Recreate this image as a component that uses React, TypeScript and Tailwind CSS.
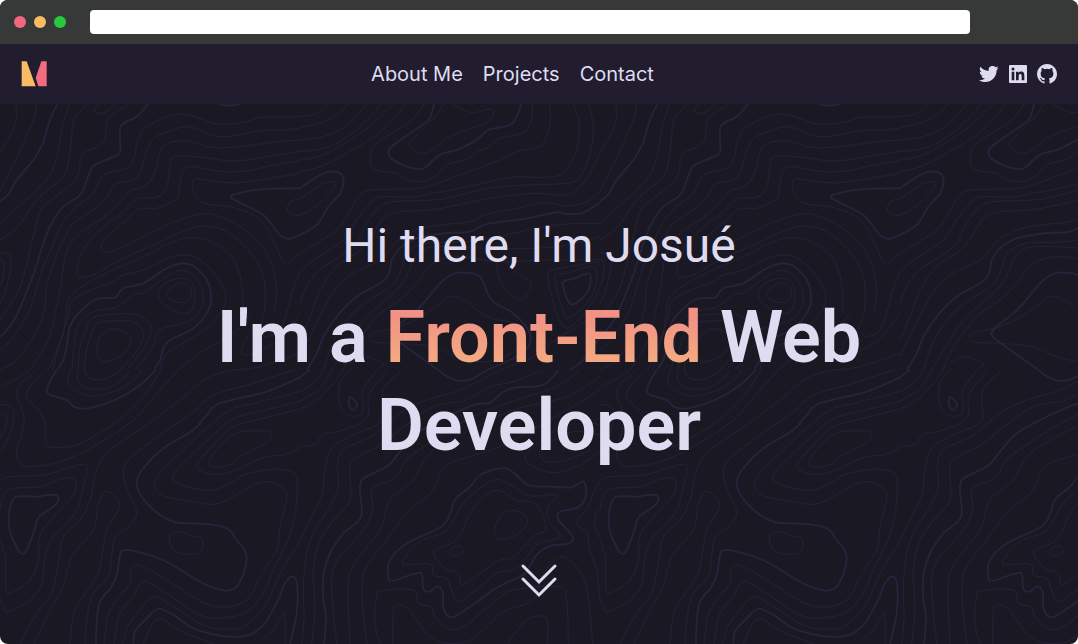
import React from "react";
import { BiLogoGithub, BiLogoLinkedinSquare, BiLogoTwitter } from "react-icons/bi";

type Contours = { thin: string[]; bold: string[]; thinLoops: string[]; boldLoops: string[] };

// Contour points of the topographic tile, one set per quadrant, three units to a pixel.
const topLeft: Contours = {
  thin: [
    "48,12 48,60 30,105 0,160",
    "110,12 100,60 75,120 40,195 0,272",
    "207,12 190,70 175,150 155,215 115,265 60,315 0,370",
    "260,12 222,60 215,110 205,190 185,235 120,290 85,335 50,385 0,420",
    "295,12 283,30 295,40 320,35 345,12",
    "388,12 330,50 318,80 315,120 290,140 245,165 238,210 225,240 180,280 130,320 110,370 90,450 70,530 50,580 0,660",
    "900,50 850,52 780,52 740,65 690,72 640,70 600,55 555,43 500,50 440,80 415,115 400,180 380,205 320,220 300,240 280,280 230,320 185,370 160,430 130,500 105,580 85,640 40,710 0,752",
    "900,85 850,90 770,93 720,105 660,110 620,100 580,83 540,83 465,112 440,150 420,220 400,240 345,253 325,285 280,330 220,370 190,420 165,480 140,560 132,640 100,710 50,780 0,808",
    "900,120 820,127 740,137 680,143 630,141 580,127 540,123 500,132 480,155 465,215 440,255 395,270 370,295 320,345 260,385 220,420 195,470 185,540 165,640 145,720 90,810",
    "900,154 800,170 740,180 680,182 610,172 530,168 512,185 505,240 490,280 460,293 410,297 370,335 300,390 255,440 232,500 233,528 250,533 290,520 350,485 470,430 560,390 620,378 680,395 740,445 780,500 795,560 792,640 770,700",
    "900,182 850,190 800,200 740,213 670,215 620,207 575,200 550,212 538,260 530,295 470,325 420,325 380,360 320,410 304,438 318,458 380,435 500,375 600,342 660,350 730,385 790,445 820,510 830,580 820,640",
    "900,220 810,235 720,248 660,246 600,237 580,242 577,265 590,295 620,312 690,320 750,340 790,370 820,420 850,485 862,490 900,460",
    "900,297 875,303 862,325 870,343 900,345",
    "728,640 728,580 715,510 680,455 620,420 575,413 520,425 430,470 350,505 260,550 210,590 200,630 190,700 170,750 145,810",
    "480,810 500,760 600,700 660,640 677,590 650,530 600,480 555,465 500,475 430,510 370,525 340,545 260,575 215,605 205,650 185,710 158,810",
    "405,810 430,780 460,740 470,705 490,685 560,665 590,645 608,610 608,570 580,525 540,512 500,530 430,578 400,583 350,622 280,635 240,665 225,720 215,810",
    "380,810 435,740 452,700 445,665 400,643 330,643 275,655 258,690 240,740 235,810",
    "360,810 410,755 430,710 427,690 400,665 330,663 290,670 275,700 260,750 252,810",
    "0,457 28,465 33,500 20,560 0,612",
    "0,478 12,490 8,540 0,560",
    "535,810 590,765 640,735 700,700 750,640",
    "745,705 725,750 735,765 780,752 830,725 870,680 900,640",
    "700,810 770,802 830,785 900,760",
    "900,515 875,580 860,640 840,690 800,710 785,700",
  ],
  bold: [
    "172,12 150,60 128,130 100,180 50,240 28,280 0,305",
    "445,12 410,50 362,80 360,155 330,175 280,198 260,240 240,285 190,320 155,370 130,430 105,510 70,600 40,665 0,712",
    "900,265 810,266 750,272 700,285 693,293 720,308 790,345 820,380 845,410 870,416 900,405",
    "462,810 480,780 490,745 510,720 580,685 620,640 633,600 625,550 590,505 550,490 500,505 430,550 370,565 345,593 290,597 240,635 210,680 200,740 190,780 172,810",
    "655,12 690,17 720,12",
  ],
  thinLoops: [
    "540,535 575,545 585,590 575,630 550,640 510,625 480,600 478,570 500,548",
    "545,549 570,560 572,595 550,608 515,600 502,582 520,558",
    "345,687 385,703 392,730 360,770 310,786 292,765 295,720 315,695",
  ],
  boldLoops: [],
};

const topRight: Contours = {
  thin: [
    "0,50 50,40 80,12",
    "0,83 60,70 110,45 145,12",
    "0,119 70,110 140,75 200,12",
    "0,154 50,150 110,130 180,80 245,12",
    "0,180 70,165 150,120 220,70 280,12",
    "0,215 60,200 130,165 200,125 260,80 318,12",
    "0,297 60,255 95,245 107,257 80,290 40,325 0,345",
    "372,12 330,65 250,115 220,140 211,180 220,205 250,215 290,220 330,243 370,243 410,225 440,195 500,178 530,155 560,145 600,115 670,98 695,60 697,12",
    "430,12 405,50 350,105 328,130 335,148 370,160 400,148 440,115 500,90 560,68 580,45 575,28 555,30 520,38 490,30 458,12",
    "750,12 750,70 730,130 700,145 650,155 600,180 520,210 430,243 360,265 270,268 210,270 175,290 140,350 110,390 50,430 0,460",
    "820,12 838,70 830,150 805,200 780,225 720,233 650,230 570,245 480,265 400,280 330,292 245,290 210,310 170,360 130,420 80,455 30,490 0,515",
    "866,12 880,80 870,160 840,230 800,250 680,255 560,265 430,297 280,305 235,325 200,370 160,440 60,510 20,560 0,610",
    "900,160 870,220 830,270 790,285 700,280 600,290 540,300 450,320 390,330 300,335 250,355 215,410 180,450 110,500 60,570 30,650 0,720",
    "900,272 860,305 800,318 730,308 650,325 560,343 510,365 420,375 350,390 290,425 240,480 150,525 90,590 50,670 0,770",
    "900,371 800,372 700,385 640,400 500,425 380,430 320,460 300,520 270,560 180,620 120,690 90,750 70,810",
    "900,410 800,435 700,445 560,445 400,440 345,470 320,530 280,580 200,650 150,720 95,810",
    "900,480 740,480 590,485 480,470 400,490 350,550 300,600 240,640 190,700 150,760 130,810",
    "590,485 600,540 640,590 665,597 690,570 692,545 650,520 620,485",
    "900,490 880,488 760,510 745,530 755,590 790,680 830,665 880,600 900,560",
    "600,810 700,770 780,710 900,640",
    "230,810 250,790 190,770 150,790",
  ],
  bold: [
    "402,12 385,60 330,100 275,140 265,160 280,180 330,203 370,205 400,180 430,160 470,150 530,120 565,90 630,75 650,50 665,12",
    "900,308 850,338 800,342 770,337 680,355 560,372 510,395 430,400 350,415 300,445 275,480 268,520 240,550 170,590 110,650 70,710 50,760 20,810",
    "0,265 60,225 105,215 130,235 120,280 85,320 50,375 0,405",
    "415,810 380,785 310,735 275,705 290,680 340,640 370,610 420,550 460,522 500,518 540,530 575,600 640,640 685,690 690,730 650,770 560,810",
    "900,712 850,780 810,810",
  ],
  thinLoops: [
    "455,588 500,605 560,650 640,670 670,700 650,750 560,785 470,770 400,740 300,730 216,725 220,700 300,680 370,645 420,610",
    "765,530 800,520 880,500 888,550 860,610 805,653 785,620",
  ],
  boldLoops: ["790,545 830,533 865,520 872,540 860,580 820,613 800,595 790,560"],
};

const bottomLeft: Contours = {
  thin: [
    "0,50 60,20 90,0",
    "110,0 60,45 52,80 72,140 65,190 50,240 60,280 100,290 180,275 280,230 400,150 480,60 535,0",
    "135,0 90,50 80,80 115,120 135,160 137,218 160,232 220,228 270,205 350,155 430,80 482,0",
    "210,0 205,40 225,62 280,78 340,65 390,40 425,0",
    "232,0 235,35 260,55 320,55 370,25 390,0",
    "253,0 265,23 300,29 340,15 362,0",
    "0,103 30,108 42,130 30,190 0,250",
    "0,132 18,138 18,165 0,205",
    "700,0 620,25 540,90 440,165 330,240 290,300 270,390 240,450 190,500 175,580 155,670 110,730 60,822",
    "880,0 760,40 640,75 580,125 480,195 390,265 370,315 385,370 410,430 380,475 345,500 335,560 325,620 280,670 260,750 255,822",
    "900,65 760,100 690,120 620,175 560,230 480,310 465,350 490,377 560,392 640,403 700,380 760,345 810,335 850,355 860,385 840,470 830,540 780,620 750,680 690,710 620,702 540,655 460,605 410,585 392,605 390,640 330,720 312,822",
    "900,94 790,122 710,142 650,185 570,260 518,320 550,347 630,361 680,345 740,312 820,298 880,308 892,345 885,430 860,520 820,600 790,670 740,725 660,745 590,730 500,670 430,635 400,680 360,730 342,822",
    "900,118 790,145 700,170 650,215 593,280 600,300 640,314 700,303 790,262 850,255 900,232",
    "900,515 840,610 800,700 740,765 680,778 610,765 520,710 460,681 420,720 385,765 368,822",
    "430,822 455,765 475,748 500,755 530,778 640,822",
    "780,815 820,780 852,730 855,822",
    "0,335 30,320 130,315 200,295 250,283 262,300 245,370 225,430 160,500 135,560 125,640 90,690 25,725 10,710 0,685",
    "0,420 10,375 40,355 120,350 190,325 225,330 220,375 170,430 120,495 115,570 90,630 30,670 18,650 15,560 0,505",
    "103,822 150,720 190,650 215,560 280,480 295,400 315,365 345,380 357,415 320,480 305,560 290,620 225,720 210,822",
  ],
  bold: [
    "170,0 145,45 145,72 200,90 225,112 270,114 350,88 420,45 468,0",
    "900,22 800,65 660,100 620,135 580,180 490,235 430,295 410,335 425,380 480,435 530,457 620,462 680,475 710,510 738,550 735,595 710,650 670,661 600,635 500,575 430,550 375,540 360,555 352,610 335,650 300,695 290,760 288,822",
    "400,822 405,785 440,745 475,717 520,735 580,775 660,797 740,797 790,765 830,700 855,640 880,620 892,650 890,730 870,822",
  ],
  thinLoops: [
    "715,187 790,183 810,185 808,210 770,235 720,260 690,285 635,290 630,270 660,228",
    "515,490 540,485 575,497 605,505 603,545 560,553 525,543 508,515",
  ],
  boldLoops: ["45,383 110,380 160,374 176,385 160,410 115,443 100,490 70,552 35,500 26,440"],
};

const bottomRight: Contours = {
  thin: [
    "0,65 40,40 70,0",
    "0,94 60,55 95,0",
    "0,118 50,90 100,40 130,0",
    "150,0 120,40 118,100 140,135 180,135 190,110 190,60 230,0",
    "0,230 45,222 70,193 130,180 200,145 205,80 230,40 265,0",
    "305,0 250,60 248,140 230,165 150,200 95,235 75,300 65,380 30,450 0,515",
    "600,0 480,60 380,90 300,130 220,195 130,240 112,290 115,350 90,410 45,480 20,550 10,650 12,740 5,822",
    "730,0 640,35 570,50 500,90 400,110 300,180 250,220 165,265 150,300 150,390 110,440 60,510 40,600 45,720 35,822",
    "840,0 770,50 650,90 500,150 330,260 290,320 225,350 213,370 218,420 190,480 120,560 95,620 100,720 110,822",
    "900,20 800,80 640,120 500,185 390,250 340,330 270,390 240,480 170,570 145,640 150,822",
    "900,60 750,150 600,230 460,275 425,300 400,360 320,430 260,510 195,600 187,690 200,822",
    "900,165 820,150 740,200 675,265 750,307 830,290 900,245",
    "900,195 820,185 740,225 718,250 740,275 800,270 870,240",
    "240,822 225,760 230,680 245,661 340,661 355,700 395,712 405,740 450,778 500,765 540,730 590,690 640,660 775,650 800,690 805,822",
    "278,822 280,730 295,705 330,722 380,790 430,818 500,815 560,770 610,725 700,690 725,620 775,563 820,580 860,650 878,822",
    "620,822 680,750 730,738 743,755 742,822",
    "900,335 880,370 865,410 830,460 862,490 868,540 890,600 900,690",
    "900,410 888,430 883,465 900,505",
  ],
  bold: [
    "0,22 30,0",
    "775,0 730,45 650,52 610,65 570,98 520,105 430,145 350,190 300,245 260,290 195,322 180,350 183,440 130,490 90,550 70,620 70,690 78,740 72,822",
    "415,0 450,25 485,33 520,25 560,0",
  ],
  thinLoops: [
    "600,329 640,350 690,378 770,375 745,410 745,450 780,495 760,510 710,525 650,595 590,610 530,660 475,695 455,660 440,625 400,615 390,582 310,582 330,545 370,510 440,480 490,400 560,340",
    "595,361 650,390 710,405 738,475 700,500 640,560 590,575 490,643 475,610 435,595 402,545 470,510 510,430 550,380",
    "635,421 675,435 680,465 640,500 595,508 583,485 600,440",
    "470,528 490,538 480,555 455,556 452,538",
  ],
  boldLoops: [
    "150,82 172,102 158,120 147,105",
    "620,296 685,345 760,350 815,352 850,335 858,375 835,412 780,425 775,450 815,495 810,520 750,528 710,555 675,610 630,633 580,660 510,710 455,742 430,715 428,665 410,650 390,665 370,655 365,612 340,612 275,633 264,610 270,570 320,520 430,465 465,390 510,350 545,313",
  ],
};

// Catmull-Rom interpolation of a point list into a cubic path.
function smooth(list: string, closed: boolean): string {
  const pts = list.split(" ").map((p) => p.split(",").map(Number));
  const n = pts.length;
  const at = (i: number) => (closed ? pts[(i + n) % n] : pts[Math.max(0, Math.min(n - 1, i))]);
  let d = `M${pts[0].join(" ")}`;
  for (let i = 0; i < (closed ? n : n - 1); i++) {
    const [a, b, c, e] = [at(i - 1), at(i), at(i + 1), at(i + 2)];
    d += `C${b[0] + (c[0] - a[0]) / 6} ${b[1] + (c[1] - a[1]) / 6} ${c[0] - (e[0] - b[0]) / 6} ${c[1] - (e[1] - b[1]) / 6} ${c[0]} ${c[1]}`;
  }
  return closed ? d + "Z" : d;
}

function Quadrant({ data, x, y }: { data: Contours; x: number; y: number }) {
  const join = (open: string[], loops: string[]) =>
    [...open.map((l) => smooth(l, false)), ...loops.map((l) => smooth(l, true))].join("");
  return (
    <g transform={`translate(${x} ${y})`}>
      <path d={join(data.thin, data.thinLoops)} stroke="#242036" strokeWidth="3" />
      <path d={join(data.bold, data.boldLoops)} stroke="#27233d" strokeWidth="5" />
    </g>
  );
}

function Topography() {
  return (
    <svg className="absolute inset-0 h-full w-full" aria-hidden="true">
      <defs>
        <pattern id="topography" width="600" height="600" patternUnits="userSpaceOnUse">
          <g transform="translate(0 -4) scale(0.33333)" fill="none">
            <Quadrant data={topLeft} x={0} y={0} />
            <Quadrant data={topRight} x={900} y={0} />
            <Quadrant data={bottomLeft} x={0} y={810} />
            <Quadrant data={bottomRight} x={900} y={810} />
          </g>
        </pattern>
      </defs>
      <rect width="100%" height="100%" fill="url(#topography)" />
    </svg>
  );
}

const links = [
  { label: "About Me", href: "#about" },
  { label: "Projects", href: "#projects" },
  { label: "Contact", href: "#contact" },
];

const socials = [
  { label: "Twitter", href: "#twitter", Icon: BiLogoTwitter },
  { label: "LinkedIn", href: "#linkedin", Icon: BiLogoLinkedinSquare },
  { label: "GitHub", href: "#github", Icon: BiLogoGithub },
];

export default function App() {
  return (
    <div className="min-h-screen bg-white">
      <div className="flex min-h-screen flex-col overflow-hidden rounded-lg bg-[#1a1823] text-[#dfdcf2]">
        <div className="flex h-11 items-center bg-[#373939] pr-[108px] pl-[14px]">
          <div className="flex w-[76px] shrink-0 gap-2">
            <span className="size-3 rounded-full bg-[#f4667c]" />
            <span className="size-3 rounded-full bg-[#fbbd60]" />
            <span className="size-3 rounded-full bg-[#27c93f]" />
          </div>
          <input aria-label="Address" className="h-6 min-w-0 flex-1 rounded bg-white px-2 text-sm text-black outline-none" />
        </div>

        <header className="flex h-15 items-center justify-between bg-[#211d2e] pr-[19px] pl-5">
          <a href="#home" aria-label="Home">
            <svg width="28" height="28" viewBox="0 0 84 84" className="block">
              <path d="M5 4h15l27 75H5z" fill="#fabb66" />
              <path d="M64 4h16v75H55l-8-25z" fill="#f26b7e" />
            </svg>
          </a>
          <nav className="flex gap-5 font-['Inter',sans-serif] text-xl leading-7">
            {links.map((l) => (
              <a key={l.label} href={l.href}>
                {l.label}
              </a>
            ))}
          </nav>
          <div className="flex gap-[5px]">
            {socials.map(({ label, href, Icon }) => (
              <a key={label} href={href} aria-label={label}>
                <Icon className="size-6" />
              </a>
            ))}
          </div>
        </header>

        <main className="relative flex flex-1 flex-col">
          <Topography />
          <div className="relative flex flex-1 flex-col items-center px-6 pt-[106px] pb-11 text-center font-['Roboto',sans-serif]">
            <p className="text-5xl leading-[72px]">Hi there, I'm Josué</p>
            <h1 className="mt-3 max-w-[780px] text-[72px] leading-[88px] font-semibold">
              I'm a{" "}
              <span className="bg-linear-to-b from-[#f29286] from-25% to-[#f3aa80] to-80% bg-clip-text text-transparent">
                Front-End
              </span>{" "}
              Web Developer
            </h1>
            <a href="#about" aria-label="Scroll down" className="mt-auto">
              <svg
                width="40"
                height="40"
                viewBox="0 0 40 40"
                fill="none"
                stroke="currentColor"
                strokeWidth="3"
                strokeLinecap="round"
              >
                <path d="M4 6l16 16L36 6M4 19l16 16 16-16" />
              </svg>
            </a>
          </div>
        </main>
      </div>
    </div>
  );
}
